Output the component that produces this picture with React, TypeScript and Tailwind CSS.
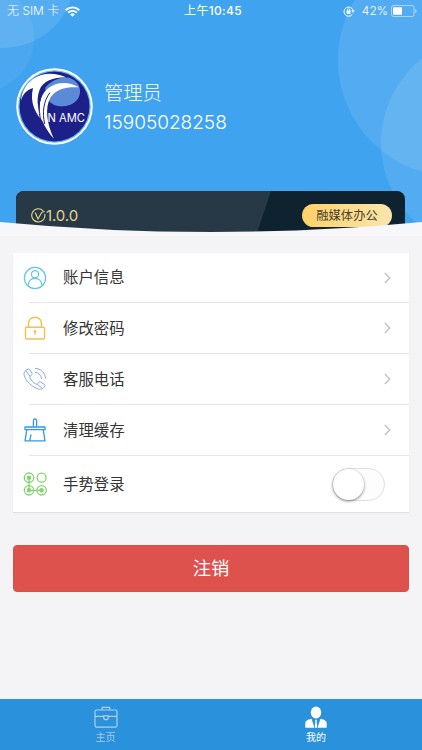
import React, { useState } from 'react'

interface MenuItem {
  id: string
  label: string
  icon: React.ReactNode
}

const UserIcon = () => (
  <svg width="24" height="24" viewBox="0 0 24 24" fill="none" stroke="#62c6ec" strokeWidth="1.2">
    <circle cx="12" cy="12" r="10.6" />
    <circle cx="12" cy="8.2" r="3.6" />
    <path d="M5.200 19.600c0-4.700 2.900-7.300 6.800-7.300s6.800 2.600 6.800 7.300" />
  </svg>
)

const LockIcon = () => (
  <svg width="24" height="24" viewBox="0 0 24 24" fill="none" stroke="#f6c04d" strokeWidth="1.4">
    <rect x="2.5" y="11.3" width="19" height="11.7" rx="1.2" />
    <path d="M5.500 11.300V7.700a6.500 6.500 0 0 1 13 0v3.600" />
    <circle cx="12" cy="15.4" r="1" fill="#f6b73c" strokeWidth="0.8" />
    <path d="M12 15.500v3.200" strokeWidth="1.3" />
  </svg>
)

const PhoneIcon = () => (
  <svg width="24" height="24" viewBox="0 0 24 24" fill="none" stroke="#83a8e8" strokeWidth="1" strokeLinecap="round" strokeLinejoin="round">
    <path d="M4.700 2.300c.8-.5 1.500-.2 2 .5l2.200 3.400c.5.800.3 1.500-.4 2l-1.200.9c-.7.500-.7 1.100-.3 1.900 1.300 2.500 3.300 4.500 5.800 6 .8.500 1.400.4 1.900-.3l.9-1.200c.5-.7 1.200-.8 2-.4l3.600 2.200c.8.500 1 1.200.5 2-1.600 2.700-4.300 3.700-7.200 2.500C8 19.200 3.200 14.200 1.300 8.700.4 6 1.700 3.600 4.700 2.300z" />
    <path d="M3.200 4 6.800 9M14.500 17.500l5 4" />
    <path d="M12.300 1.300c5.500.3 9.800 4.500 10.300 10M12.300 5.300c3.300.4 5.800 2.900 6.300 6.200" />
  </svg>
)

const BroomIcon = () => (
  <svg width="24" height="24" viewBox="0 0 24 24" fill="none" stroke="#329be3" strokeWidth="1.3" strokeLinejoin="round">
    <path d="M10.400 9V2.600a1.600 1.600 0 0 1 3.200 0V9" />
    <path d="M2 9h20v2.700H2z" />
    <path d="M3.800 11.700 2 22.800h20l-1.800-11.100" />
    <path d="M8 16.500l-1.200 6" />
  </svg>
)

const GestureIcon = () => (
  <svg width="24" height="24" viewBox="0 0 24 24" fill="none" stroke="#82d56c" strokeWidth="1.3">
    <circle cx="6" cy="5.7" r="4.7" />
    <circle cx="18.600" cy="5.7" r="4.5" />
    <circle cx="6" cy="18.3" r="4.7" />
    <circle cx="18.600" cy="18.3" r="4.7" />
    <path d="M6 5.700v12.600h12.600" />
    <g fill="#82d56c" stroke="none">
      <circle cx="6" cy="5.7" r="2.2" />
      <circle cx="6" cy="18.3" r="2.2" />
      <circle cx="18.600" cy="18.3" r="2.2" />
    </g>
  </svg>
)

const WifiIcon = () => (
  <svg width="15" height="11" viewBox="0 0 15 11" fill="none" stroke="white" strokeWidth="1.9">
    <path d="M.7 4.200a9.700 9.700 0 0 1 13.600 0" />
    <path d="M3.100 6.700a6.200 6.200 0 0 1 8.800 0" />
    <path d="M7.500 10.800 5.200 8.500a3.200 3.200 0 0 1 4.600 0z" fill="white" stroke="none" />
  </svg>
)

const RotationLockIcon = () => (
  <svg width="12" height="11" viewBox="0 0 12 11" fill="none" stroke="white" strokeWidth="1">
    <path d="M9.300 8.400A4.600 4.600 0 1 1 10 4.300" />
    <path d="M8.300 4.400h3.500L10 6.700z" fill="white" stroke="none" />
    <rect x="3.500" y="4.600" width="4" height="3.2" fill="white" stroke="none" />
    <path d="M4.300 5V3.900a1.200 1.200 0 0 1 2.400 0V5" strokeWidth="0.9" />
  </svg>
)

const BatteryIcon = () => (
  <svg width="26" height="12" viewBox="0 0 26 12" fill="none">
    <rect x=".5" y=".5" width="22.5" height="11" rx="2" stroke="white" strokeOpacity=".5" />
    <rect x="2" y="2.300" width="9" height="7.4" rx=".5" fill="white" />
    <path d="M24.200 4v4c1-.3 1.400-1.100 1.400-2s-.4-1.700-1.400-2z" fill="white" fillOpacity=".5" />
  </svg>
)

const Logo = () => (
  <svg width="77" height="77" viewBox="0 0 77 77" className="shrink-0">
    <circle cx="38.5" cy="38.5" r="38.3" fill="#fff" />
    <circle cx="38.5" cy="38.5" r="36.3" fill="#5bb8f2" />
    <circle cx="38.5" cy="38.5" r="35" fill="#1d2088" />
    <path d="M29 20C35 12 48 7 56 11c6 3 8.500 8 8 14-1 8-9 13.500-18 13.300-6 0-10-2-13-5z" fill="#5b8bd8" />
    <path d="M4.800 33C6 23 10 16 17 11 26 4.500 39 4 50 9.300 37 9.500 27 13 23.500 22c-4 11-1.500 22 5.500 33.500C19 46 13.500 34 17 20 10 22 6.500 27 4.800 33z" fill="#fff" />
    <path d="M62.800 19.300C51 12 36 14 28 24.500 20 36 23 54 37.800 70.500 31 56 28.500 40 34.500 29.500 40 20.500 51 18.500 62.800 19.300z" fill="#fff" />
    <path d="M27.500 24C22.500 32 21.500 43 25.500 54M34 24.500c-6.500 8.500-8 20-5.300 31.500" stroke="#1d2088" strokeWidth="1" fill="none" />
    <text x="31.500" y="53.500" fontFamily="Inter, sans-serif" fontSize="11.500" fill="#fff" textLength="37.500" lengthAdjust="spacingAndGlyphs">N AMC</text>
  </svg>
)

const BriefcaseIcon = () => (
  <svg width="24" height="22" viewBox="0 0 24 22" fill="none" stroke="#b4cfe0" strokeWidth="1.2">
    <rect x="1" y="4" width="22" height="17.2" rx="1.5" />
    <path d="M8.200 4V1.300h7.500V4M1 10.300h8.700M14.300 10.300H23" />
    <path d="M9.700 9.900v1.500a2.300 2.300 0 0 0 4.600 0V9.900z" />
  </svg>
)

const PersonIcon = () => (
  <svg width="22" height="22" viewBox="0 0 22 22" fill="white">
    <ellipse cx="11" cy="6.4" rx="5.2" ry="6" />
    <path d="M.3 21.700v-4.500c0-2 1.600-3.500 6.200-4.500l3 9zM21.700 21.700v-4.500c0-2-1.600-3.500-6.200-4.500l-3 9z" />
    <path d="M10 13.800h2l-.4 1.700.6 4.700-.3 1.500h-1.800l-.3-1.500.6-4.700z" />
  </svg>
)

const Chevron = () => (
  <svg width="7" height="12" viewBox="0 0 7 12" fill="none" stroke="#bdbdbf" strokeWidth="1.2">
    <path d="M.8 1 5.800 6l-5 5" />
  </svg>
)

const menuItems: MenuItem[] = [
  { id: 'account', label: '账户信息', icon: <UserIcon /> },
  { id: 'password', label: '修改密码', icon: <LockIcon /> },
  { id: 'service', label: '客服电话', icon: <PhoneIcon /> },
  { id: 'cache', label: '清理缓存', icon: <BroomIcon /> }
]

export default function App() {
  const [gestureLogin, setGestureLogin] = useState(false)

  return (
    <div className="flex h-[750px] w-[422px] flex-col overflow-hidden bg-[#f4f4f7] font-['Inter','Noto_Sans_CJK_SC',sans-serif]">
      <header className="relative h-[236px] shrink-0 overflow-hidden bg-[#40a3f0] text-white">
        {/* Background bubbles */}
        <svg className="absolute inset-0" width="422" height="236" fill="white">
          <circle cx="3" cy="-24" r="72" fillOpacity=".11" />
          <circle cx="-20" cy="38" r="54" fillOpacity=".06" />
          <circle cx="454" cy="60" r="116" fillOpacity=".1" />
          <circle cx="489" cy="143" r="108" fillOpacity=".1" />
        </svg>

        {/* Status bar */}
        <div className="relative grid h-[22px] grid-cols-3 items-center pl-[7px] pr-[5px] text-[12px] leading-none">
          <div className="flex items-center gap-[6px]">
            <span className="whitespace-nowrap font-light">无 SIM 卡</span>
            <WifiIcon />
          </div>
          <span className="pl-[2px] text-center text-[12px] tracking-[0.3px]">
            上午<span className="font-medium">10:45</span>
          </span>
          <div className="flex items-center justify-end">
            <RotationLockIcon />
            <span className="ml-[7px] mr-[3px] font-light">42%</span>
            <BatteryIcon />
          </div>
        </div>

        {/* Profile */}
        <div className="relative mt-[46px] flex items-center pl-4">
          <Logo />
          <div className="ml-[11px] flex flex-col pt-[3px] font-light">
            <span className="text-[19.3px] leading-[30px]">管理员</span>
            <span className="text-[19px] leading-[30px]">15905028258</span>
          </div>
        </div>

        {/* Version card */}
        <div className="relative mx-4 mt-[46px] flex h-[45px] w-[389px] items-start justify-between overflow-hidden rounded-t-[8px] bg-[#0e2230] pl-[15px] pr-[13px] pt-[13px]">
          <svg className="absolute inset-0" width="389" height="45">
            <path d="M0 0h255l-15 45H0z" fill="#273946" />
          </svg>
          <div className="relative mt-[3px] flex items-center text-[#e9d58f]">
            <svg width="15" height="15" viewBox="0 0 15 15" fill="none" stroke="currentColor" strokeWidth="1.1">
              <path d="M12.300 3a6.600 6.600 0 1 0 1.500 3" />
              <path d="M4.200 4.500 7 11l3.500-6.200c.7-1 1.700-1.300 3.300-1" />
            </svg>
            <span className="text-[15px] leading-[17px] tracking-[-0.1px]">1.0.0</span>
          </div>
          <div className="relative flex h-[23px] w-[90px] items-center justify-center rounded-full bg-linear-to-r from-[#ffd267] to-[#f9e5ac] pt-px text-[12.3px] leading-none text-[#493f2c]">
            融媒体办公
          </div>
        </div>

        <svg className="absolute bottom-0 left-0" width="422" height="14">
          <path d="M0 0Q211 20 422 0V14H0z" fill="#f7f7f9" />
        </svg>
      </header>

      <main className="flex flex-1 flex-col px-[13px] pt-[17px]">
        <div className="h-[259px] bg-white shadow-[0_1px_1px_rgba(0,0,0,0.08)]">
          {menuItems.map((item, i) => (
            <div key={item.id} className={`ml-4 flex items-center justify-between border-b border-[#e6e6e8] pr-[18px] ${i === 0 ? 'h-[50px]' : 'h-[51px]'}`}>
              <div className="-ml-[6px] flex items-center gap-[16px]">
                {item.icon}
                <span className="pt-px text-[15.4px] leading-6 text-[#343434]">{item.label}</span>
              </div>
              <Chevron />
            </div>
          ))}
          <div className="flex h-[56px] items-center justify-between pl-[10px] pr-[24px]">
            <div className="flex items-center gap-[16px]">
              <GestureIcon />
              <span className="pt-px text-[15.4px] leading-6 text-[#343434]">手势登录</span>
            </div>
            <button
              role="switch"
              aria-checked={gestureLogin}
              onClick={() => setGestureLogin(!gestureLogin)}
              className={`flex h-[33px] w-[53px] items-center rounded-full border border-[#dfdfdf] ${gestureLogin ? 'justify-end bg-[#40a3f0]' : 'bg-[#fdfdfd]'}`}
            >
              <span className="h-[31px] w-[31px] rounded-full bg-white shadow-[0_1px_3px_rgba(0,0,0,0.5)]" />
            </button>
          </div>
        </div>

        <button className="mt-[33px] h-[47px] w-full rounded-[4px] border border-[#d9504b] bg-[#dd524d] pt-px text-[18.3px] text-white">
          注销
        </button>
      </main>

      {/* Tab bar */}
      <nav className="grid h-[51px] shrink-0 grid-cols-2 bg-[#2a91dc] pt-[7px] text-[10px] leading-[14px]">
        <div className="flex flex-col items-center gap-[2px] text-[#a8cae4]">
          <BriefcaseIcon />
          <span>主页</span>
        </div>
        <div className="flex flex-col items-center gap-[2px] pr-px text-white">
          <PersonIcon />
          <span>我的</span>
        </div>
      </nav>
    </div>
  )
}
